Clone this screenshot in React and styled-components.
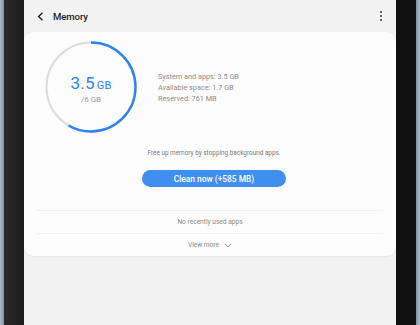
import styled, { createGlobalStyle } from "styled-components";

const GlobalStyle = createGlobalStyle`
  html, body {
    margin: 0;
    padding: 0;
    background: #f2f2f2;
  }
  body {
    font-family: Roboto, "Noto Sans", "Liberation Sans", sans-serif;
  }
`;

const used = 3.5;
const total = 6;

function UsageRing() {
  const r = 44.5;
  const c = 2 * Math.PI * r;
  const part = (used / total) * c;
  return (
    <RingBox>
      <svg width="92" height="92" viewBox="0 0 92 92">
        <circle cx="46" cy="46" r={r} fill="none" stroke="#dcdcdc" strokeWidth="2" />
        <circle
          cx="46"
          cy="46"
          r={r}
          fill="none"
          stroke="#2d84ef"
          strokeWidth="2.4"
          strokeDasharray={`${part} ${c}`}
          transform="rotate(-90 46 46)"
        />
      </svg>
      <RingText>
        <Big>
          3.5<Unit>GB</Unit>
        </Big>
        <Sub>/6 GB</Sub>
      </RingText>
    </RingBox>
  );
}

function App() {
  return (
    <>
      <GlobalStyle />
      <Device>
        <Edge />
        <Bezel />
        <Screen>
          <Header>
            <Back>
              <svg width="7" height="9" viewBox="0 0 7 9">
                <path d="M5.5 0.8 L1.6 4.5 L5.5 8.2" fill="none" stroke="#222" strokeWidth="1.4" />
              </svg>
            </Back>
            <Title>Memory</Title>
            <Kebab>
              <i />
              <i />
              <i />
            </Kebab>
          </Header>
          <Card>
            <Summary>
              <Usage>
                <UsageRing />
                <Stats>
                  <li>System and apps: 3.5 GB</li>
                  <li>Available space: 1.7 GB</li>
                  <li>Reserved: 761 MB</li>
                </Stats>
              </Usage>
              <Hint>Free up memory by stopping background apps.</Hint>
              <CleanButton>Clean now (+585 MB)</CleanButton>
            </Summary>
            <Row>No recently used apps</Row>
            <Row last>
              View more
              <svg width="8" height="5" viewBox="0 0 8 5">
                <path d="M0.8 0.8 L4 4 L7.2 0.8" fill="none" stroke="#8a8a8a" strokeWidth="1" />
              </svg>
            </Row>
          </Card>
        </Screen>
        <Bezel dark />
        <Edge right />
      </Device>
    </>
  );
}

const Device = styled.div`
  display: flex;
  width: 420px;
  height: 325px;
  overflow: hidden;
`;

const Edge = styled.div`
  width: 4px;
  background: ${(p) =>
    p.right
      ? "linear-gradient(90deg, #7d909b, #a9bcc7)"
      : "linear-gradient(90deg, #a8bcc8, #7f94a1)"};
`;

const Bezel = styled.div`
  width: 20px;
  background: ${(p) =>
    p.dark ? "#111111" : "linear-gradient(90deg, #2a2a2a, #1c1c1c)"};
`;

const Screen = styled.div`
  flex: 1;
  background: #f2f2f2;
  display: flex;
  flex-direction: column;
`;

const Header = styled.div`
  height: 32px;
  display: flex;
  align-items: center;
  padding: 0 14px 0 13px;
  box-sizing: border-box;
`;

const Back = styled.div`
  display: flex;
  width: 16px;
  svg {
    display: block;
  }
`;

const Title = styled.div`
  flex: 1;
  font-size: 9.6px;
  color: #1e1e1e;
  font-weight: 500;
  letter-spacing: -0.1px;
`;

const Kebab = styled.div`
  display: flex;
  flex-direction: column;
  gap: 1.6px;
  i {
    display: block;
    width: 2.2px;
    height: 2.2px;
    border-radius: 50%;
    background: #333;
  }
`;

const Card = styled.div`
  background: #fcfcfc;
  border-radius: 10px;
  padding: 10px 13px 0;
  box-shadow: 0 0.5px 1px rgba(0, 0, 0, 0.04);
`;

const Summary = styled.div`
  display: flex;
  flex-direction: column;
  align-items: center;
  padding-left: 8px;
  padding-bottom: 23px;
  border-bottom: 1px solid #f0f0f0;
`;

const Usage = styled.div`
  align-self: flex-start;
  display: flex;
  align-items: center;
  gap: 21px;
`;

const RingBox = styled.div`
  position: relative;
  width: 92px;
  height: 92px;
  margin-top: -1px;
  svg {
    display: block;
  }
`;

const RingText = styled.div`
  position: absolute;
  inset: 0;
  display: flex;
  flex-direction: column;
  align-items: center;
  justify-content: center;
  padding-top: 4px;
`;

const Big = styled.div`
  color: #2d84ef;
  font-size: 17px;
  line-height: 20px;
  letter-spacing: 0.2px;
`;

const Unit = styled.span`
  font-size: 11px;
  margin-left: 2px;
`;

const Sub = styled.div`
  color: #9a9a9a;
  font-size: 8px;
  line-height: 12px;
  margin-top: -2px;
`;

const Stats = styled.ul`
  list-style: none;
  margin: 2px 0 0;
  padding: 0;
  li {
    font-size: 7.3px;
    line-height: 10.8px;
    color: #8c8c8c;
  }
`;

const Hint = styled.div`
  margin-top: 15px;
  font-size: 6.4px;
  line-height: 10px;
  color: #7a7a7a;
`;

const CleanButton = styled.button`
  margin-top: 12px;
  width: 144px;
  height: 17px;
  border: none;
  border-radius: 9px;
  background: #3f8ff0;
  color: #ffffff;
  font-family: inherit;
  font-size: 8.4px;
  font-weight: 500;
  padding: 0;
`;

const Row = styled.div`
  height: 22px;
  display: flex;
  align-items: center;
  justify-content: center;
  gap: 5px;
  font-size: 6.6px;
  color: #8a8a8a;
  border-bottom: ${(p) => (p.last ? "none" : "1px solid #f0f0f0")};
  svg {
    display: block;
  }
`;

export default App;
